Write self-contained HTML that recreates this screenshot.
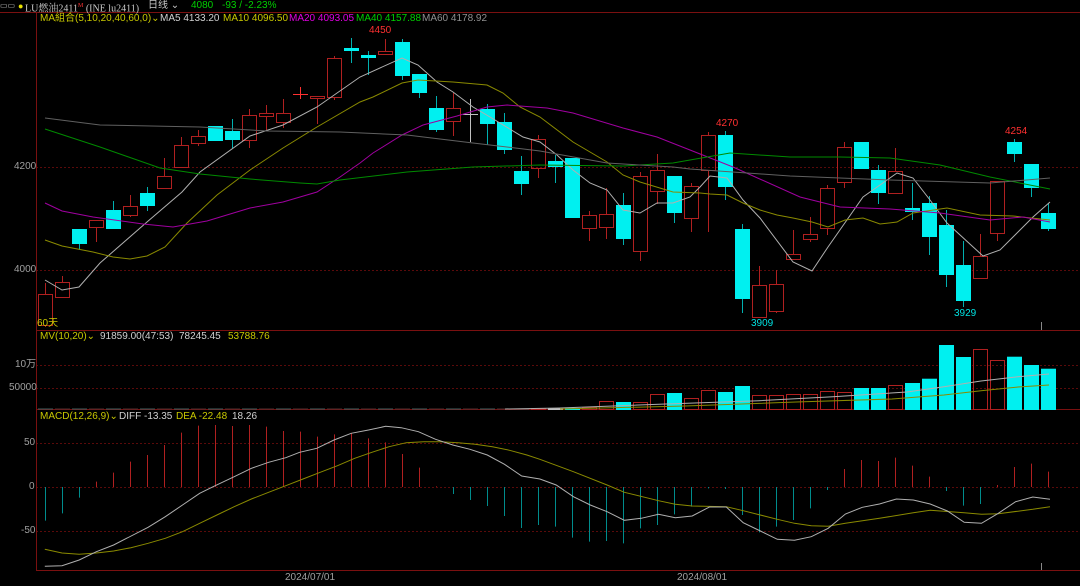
<!DOCTYPE html>
<html><head><meta charset="utf-8">
<style>
html,body{margin:0;padding:0;background:#000;width:1080px;height:586px;overflow:hidden}
body{position:relative;font-family:"Liberation Sans","Noto Sans CJK SC",sans-serif;font-size:10px}
.t{position:absolute;white-space:nowrap;line-height:12px}
svg{position:absolute;left:0;top:0}
</style></head><body>
<svg id="s" width="1080" height="586" viewBox="0 0 1080 586"></svg>

<div class="t" style="left:0;top:0;color:#bbb;font-size:8px">▭▭</div>
<div class="t" style="left:18px;top:0;color:#e8e000;font-size:9px">●</div>
<div class="t" style="left:25px;top:0;color:#c8c8c8;font-family:'Liberation Serif','Noto Serif CJK SC',serif;font-size:10px">LU燃油2411<sup style="font-size:6px;color:#f33">M</sup> (INE lu2411)</div>
<div class="t" style="left:148px;top:0;color:#c8c8c8">日线 ⌄</div>
<div class="t" style="left:191px;top:0;color:#00d000">4080</div>
<div class="t" style="left:222px;top:0;color:#00d000">-93 / -2.23%</div>

<div class="t" style="left:40px;top:13px;color:#c8c800">MA組合(5,10,20,40,60,0)⌄</div>
<div class="t" style="left:160px;top:13px;color:#d0d0d0">MA5 4133.20</div>
<div class="t" style="left:223px;top:13px;color:#c8c800">MA10 4096.50</div>
<div class="t" style="left:289px;top:13px;color:#e000e0">MA20 4093.05</div>
<div class="t" style="left:356px;top:13px;color:#00d000">MA40 4157.88</div>
<div class="t" style="left:422px;top:13px;color:#909090">MA60 4178.92</div>

<div class="t" style="left:14px;top:161px;color:#a0a0a0">4200</div>
<div class="t" style="left:14px;top:264px;color:#a0a0a0">4000</div>
<div class="t" style="left:37px;top:318px;color:#c8c800">60天</div>

<div class="t" style="left:369px;top:25px;color:#ff3030">4450</div>
<div class="t" style="left:716px;top:118px;color:#ff3030">4270</div>
<div class="t" style="left:751px;top:318px;color:#00e0e0">3909</div>
<div class="t" style="left:954px;top:308px;color:#00e0e0">3929</div>
<div class="t" style="left:1005px;top:126px;color:#ff3030">4254</div>

<div class="t" style="left:40px;top:331px;color:#c8c800">MV(10,20)⌄</div>
<div class="t" style="left:100px;top:331px;color:#d0d0d0">91859.00(47:53)</div>
<div class="t" style="left:179px;top:331px;color:#d0d0d0">78245.45</div>
<div class="t" style="left:228px;top:331px;color:#c8c800">53788.76</div>
<div class="t" style="left:15px;top:359px;color:#a0a0a0">10万</div>
<div class="t" style="left:9px;top:382px;color:#a0a0a0">50000</div>

<div class="t" style="left:40px;top:411px;color:#c8c800">MACD(12,26,9)⌄</div>
<div class="t" style="left:119px;top:411px;color:#d0d0d0">DIFF -13.35</div>
<div class="t" style="left:176px;top:411px;color:#c8c800">DEA -22.48</div>
<div class="t" style="left:232px;top:411px;color:#d0d0d0">18.26</div>
<div class="t" style="left:24px;top:437px;color:#a0a0a0">50</div>
<div class="t" style="left:29px;top:481px;color:#a0a0a0">0</div>
<div class="t" style="left:21px;top:525px;color:#a0a0a0">-50</div>
<div class="t" style="left:285px;top:572px;color:#a0a0a0">2024/07/01</div>
<div class="t" style="left:677px;top:572px;color:#a0a0a0">2024/08/01</div>

<script>
var s=document.getElementById('s'),h='';
function L(x1,y1,x2,y2,c,w,d){h+='<line x1="'+x1+'" y1="'+y1+'" x2="'+x2+'" y2="'+y2+'" stroke="'+c+'" stroke-width="'+(w||1)+'"'+(d?' stroke-dasharray="'+d+'"':'')+'/>';}
function P(pts,c){h+='<polyline fill="none" stroke="'+c+'" stroke-width="1" points="'+pts.map(function(p){return p[0].toFixed(1)+','+p[1].toFixed(1)}).join(' ')+'"/>';}
var G='#5a0a0a';
L(36,167.5,1080,167.5,G,1,'2,2');L(36,270.5,1080,270.5,G,1,'2,2');
L(36,365.5,1080,365.5,G,1,'2,2');L(36,388.5,1080,388.5,G,1,'2,2');
L(36,443.5,1080,443.5,G,1,'2,2');L(36,487.5,1080,487.5,G,1,'2,2');L(36,531.5,1080,531.5,G,1,'2,2');
var B='#7a1010';
L(0,12.5,1080,12.5,B);L(36,330.5,1080,330.5,B);L(36,409.5,1080,409.5,B);L(36,570.5,1080,570.5,B);L(36.5,12,36.5,571,B);
L(1041.5,322,1041.5,330,'#888');L(1041.5,563,1041.5,570,'#888');
var C=[[0,'r',294,325,283,327],[1,'r',282,297,276,297],[2,'c',229,244,229,250],[3,'r',220,227,220,242],[4,'c',210,229,201,229],[5,'r',206,215,195,217],[6,'c',193,206,187,211],[7,'r',176,188,158,188],[8,'r',145,167,137,167],[9,'r',136,143,130,146],[10,'c',126,141,126,141],[11,'c',131,140,119,148],[12,'r',115,140,109,148],[13,'r',113,116,105,130],[14,'r',113,122,99,128],[15,'x',94,94,87,99],[16,'r',96,98,96,124],[17,'r',58,97,56,100],[18,'c',48,51,38,63],[19,'c',55,58,51,75],[20,'r',51,54,39,54],[21,'c',42,76,39,80],[22,'c',74,93,74,98],[23,'c',108,130,96,132],[24,'r',108,121,93,136],[25,'w',114,114,99,142],[26,'c',109,124,104,145],[27,'c',122,150,113,154],[28,'c',171,184,156,195],[29,'r',139,168,135,178],[30,'c',161,167,155,183],[31,'c',158,218,158,218],[32,'r',215,228,211,241],[33,'r',214,227,188,239],[34,'c',205,239,193,245],[35,'r',176,251,172,261],[36,'r',170,191,154,204],[37,'c',176,213,176,223],[38,'r',186,218,183,232],[39,'r',135,170,132,232],[40,'c',135,187,131,200],[41,'c',229,299,224,313],[42,'r',285,317,266,317],[43,'r',284,311,270,313],[44,'r',254,259,230,259],[45,'r',234,239,217,242],[46,'r',188,228,185,235],[47,'r',147,182,142,188],[48,'c',142,169,142,169],[49,'c',170,193,165,204],[50,'r',171,193,148,193],[51,'c',208,212,183,220],[52,'c',203,237,196,255],[53,'c',225,275,210,287],[54,'c',265,301,241,307],[55,'r',256,278,234,278],[56,'r',181,233,181,241],[57,'c',142,154,139,162],[58,'c',164,188,164,197],[59,'c',213,229,203,231]];
var R='#b02020',CY='#00f0f0';
C.forEach(function(c){var x=45+17*c[0],t=c[1];
 if(t=='r'){L(x+.5,c[4],x+.5,c[2],R);L(x+.5,c[3],x+.5,c[5],R);h+='<rect x="'+(x-6.5)+'" y="'+(c[2]+.5)+'" width="14" height="'+Math.max(1,c[3]-c[2])+'" fill="none" stroke="'+R+'"/>';}
 else if(t=='c'){L(x+.5,c[4],x+.5,c[5],'#00b0b0');h+='<rect x="'+(x-7)+'" y="'+c[2]+'" width="15" height="'+Math.max(2,c[3]-c[2])+'" fill="'+CY+'"/>';}
 else {var col=t=='x'?'#ff3030':'#c0c0c0';L(x+.5,c[4],x+.5,c[5],col);L(x-7,c[2]+.5,x+8,c[2]+.5,col);}
});
P([[45,280],[62,290],[79,287],[100,263],[147,222],[182,192],[200,172],[250,136],[283,125],[317,107],[360,77],[402,58],[418,65],[437,82],[453,92],[473,107],[490,117],[523,137],[540,142],[557,155],[573,170],[590,183],[607,190],[623,210],[640,213],[657,203],[673,203],[690,197],[700,187],[710,176],[727,178],[743,200],[760,218],[793,262],[812,271],[828,247],[863,197],[897,173],[913,178],[930,200],[947,223],[983,256],[1000,250],[1017,233],[1033,217],[1050,202]],'#b0b0b0');
P([[45,240],[62,246],[93,252],[113,257],[130,259],[147,256],[165,247],[187,223],[217,195],[250,170],[283,148],[317,127],[360,102],[373,97],[402,83],[418,80],[453,82],[487,85],[503,93],[520,107],[540,117],[573,142],[607,162],[623,175],[640,182],[673,192],[700,193],[710,194],[727,195],[743,203],[760,210],[777,215],[793,218],[812,222],[828,227],[845,220],[863,218],[880,224],[897,222],[913,213],[947,208],[980,215],[1013,216],[1050,220]],'#8a8a00');
P([[45,203],[62,211],[93,217],[143,224],[173,227],[207,221],[250,208],[283,202],[317,192],[340,177],[360,163],[373,153],[402,135],[423,125],[457,116],[487,107],[507,105],[547,108],[573,113],[623,128],[657,137],[690,150],[733,167],[800,197],[840,207],[890,209],[940,213],[990,220],[1023,217],[1050,222]],'#a000a0');
P([[45,129],[100,147],[160,168],[200,174],[250,179],[300,183],[317,184],[340,180],[407,172],[473,167],[540,165],[623,166],[673,163],[690,160],[730,153],[790,157],[840,157],[890,158],[940,165],[990,177],[1050,189]],'#008a00');
P([[45,118],[100,125],[200,127],[267,131],[340,132],[407,135],[473,143],[540,151],[607,163],[673,167],[690,169],[790,176],[890,180],[990,183],[1050,178]],'#606060');
var V=[[29,'r',408],[30,'w',408],[31,'c',408],[32,'r',407],[33,'r',401],[34,'c',402],[35,'r',402],[36,'r',394],[37,'c',393],[38,'r',398],[39,'r',390],[40,'c',392],[41,'c',386],[42,'r',395],[43,'r',395],[44,'r',394],[45,'r',394],[46,'r',391],[47,'r',392],[48,'c',388],[49,'c',388],[50,'r',385],[51,'c',383],[52,'c',378.7],[53,'c',345],[54,'c',357],[55,'r',349],[56,'r',360],[57,'c',356.7],[58,'c',365],[59,'c',368.7]];
for(var i=0;i<29;i++){var xx=45+17*i;L(xx-7,409,xx+8,409,i%2?'#503030':'#406060');}
V.forEach(function(v){var x=45+17*v[0];
 if(v[1]=='r')h+='<rect x="'+(x-6.5)+'" y="'+(v[2]+.5)+'" width="14" height="'+(409-v[2])+'" fill="none" stroke="'+R+'"/>';
 else h+='<rect x="'+(x-7)+'" y="'+v[2]+'" width="15" height="'+(410-v[2])+'" fill="'+(v[1]=='w'?'#c0c0c0':CY)+'"/>';});
P([[505,409],[560,408],[666,404],[759,400.7],[833,396.7],[907,392],[944,386.7],[981,381],[1018,376.7],[1049,374]],'#b0b0b0');
P([[560,409],[685,406],[796,402],[892,399],[944,395],[981,390.7],[1018,387],[1049,385]],'#8a8a00');
var H=[347,325,278,230,203,170,150,120,83,62,60,63,60,65,78,80,95,88,85,100,112,147,188,244,267,285,303,333,369,360,365,398,410,408,415,370,360,328,305,250,252,330,382,365,345,310,255,192,165,168,158,182,215,258,302,297,240,186,176,200];
H.forEach(function(z,i){var x=45+17*i+.5,y=405+z/3;L(x,487,x,y,y<487?'#b02020':'#008c8c');});
function cv(a,off){return a.map(function(p){return [off+p[0]/2.904,405+p[1]/3]});}
var D=cv([[130,484],[180,482],[230,465],[280,440],[330,420],[430,367],[480,335],[530,300],[580,265],[625,242],[680,215],[730,190],[780,172],[830,158],[870,142],[920,130],[970,105],[1020,85],[1070,75],[1120,64],[1165,68],[1215,80],[1265,103],[1315,120],[1365,133],[1415,150],[1465,178],[1515,213],[1568,222]],0).concat(cv([[47,240],[97,275],[146,300],[195,320],[245,346],[294,340],[344,328],[393,338],[442,333],[492,306],[541,306],[590,353],[640,378],[689,403],[739,406],[788,395],[837,370],[887,327],[936,307],[986,297],[1035,282],[1084,285],[1133,297],[1183,318],[1232,352],[1282,355],[1331,325],[1381,290],[1431,276],[1481,283]],540));
var E=cv([[130,433],[180,444],[230,448],[280,444],[330,438],[380,428],[430,415],[480,400],[530,380],[580,355],[630,330],[680,305],[730,282],[780,262],[830,242],[880,222],[930,202],[980,182],[1030,160],[1080,142],[1130,125],[1180,113],[1230,110],[1280,110],[1330,113],[1380,118],[1430,125],[1480,136],[1530,150],[1568,163]],0).concat(cv([[97,200],[195,240],[245,262],[344,287],[393,298],[442,303],[541,305],[590,317],[689,343],[739,355],[788,362],[837,364],[887,355],[986,340],[1084,323],[1133,316],[1232,323],[1282,328],[1331,326],[1431,313],[1481,305]],540));
P(E,'#8a8a00');P(D,'#b0b0b0');
s.innerHTML=h;
</script>
</body></html>
